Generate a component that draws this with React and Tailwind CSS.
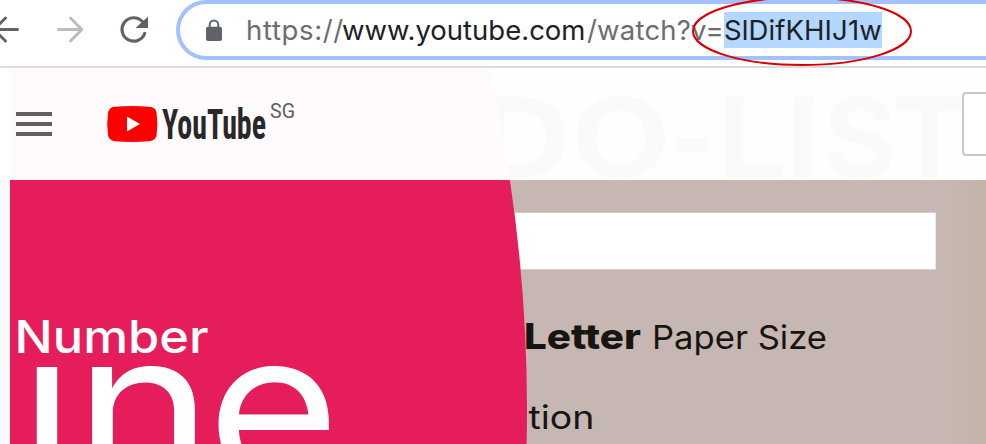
import React from "react";

function BackIcon() {
  return (
    <svg className="h-9 w-9 shrink-0" viewBox="0 0 36 36" fill="none" stroke="#5f6368" strokeWidth="3" strokeLinecap="round" strokeLinejoin="round">
      <path d="M33.5 17.5H10M21.5 6L10 17.5L21.5 29" />
    </svg>
  );
}

function ForwardIcon() {
  return (
    <svg className="h-9 w-9 shrink-0" viewBox="0 0 36 36" fill="none" stroke="#babcbe" strokeWidth="3" strokeLinecap="round" strokeLinejoin="round">
      <path d="M6.5 17.5H29.5M18.5 6L29.8 17.5L18.5 29" />
    </svg>
  );
}

function ReloadIcon() {
  return (
    <svg className="h-9 w-9 shrink-0" viewBox="0 0 36 36" fill="none">
      <path d="M26.3 9.5A11.7 11.7 0 1 0 28.7 21.5" stroke="#5f6368" strokeWidth="3.2" strokeLinecap="round" />
      <path d="M32 4.5V16H19.5Z" fill="#5f6368" />
    </svg>
  );
}

function LockIcon() {
  return (
    <svg className="h-6 w-4 shrink-0" viewBox="0 0 16 24" fill="none">
      <path d="M3.7 9V6.8a4.3 4.3 0 0 1 8.6 0V9" stroke="#5f6368" strokeWidth="2" />
      <rect x="0" y="8.7" width="16" height="14.3" rx="2" fill="#5f6368" />
    </svg>
  );
}

function Toolbar() {
  return (
    <div className="relative z-10 flex h-[68px] items-start border-b-2 border-[#dadce0] bg-white">
      <div className="flex h-[60px] w-[176px] shrink-0 items-center">
        <div className="-ml-4 flex items-center">
          <BackIcon />
          <span className="w-8" />
          <ForwardIcon />
          <span className="w-7" />
          <ReloadIcon />
        </div>
      </div>
      <div className="flex h-[60px] flex-1 items-center rounded-l-full border-y-4 border-l-4 border-[#a3c2fd] pl-[26px]">
        <LockIcon />
        <div className="ml-6 flex items-center whitespace-pre font-['Inter','Roboto',sans-serif] text-[27.5px] leading-[37px] text-[#6b6d70]">
          <span className="h-9 w-[96px] tracking-[0.65px]">https://</span>
          <span className="h-9 w-[245px] text-[#202124]">www.youtube.com</span>
          <span className="h-9 w-[137px] tracking-[0.2px]">/watch?v=</span>
          <span className="h-9 w-[158px] bg-[#b3d7ff] tracking-[0.1px] text-[#202124]">SlDifKHIJ1w</span>
        </div>
      </div>
      <svg className="absolute left-[690px] top-0 h-[68px] w-[224px]" viewBox="0 0 224 68" fill="none">
        <ellipse cx="112" cy="31.2" rx="109" ry="33.8" stroke="#da0000" strokeWidth="2" />
      </svg>
    </div>
  );
}

function Masthead() {
  return (
    <header className="relative flex h-28 items-start overflow-hidden pl-[10px]">
      <svg className="absolute left-[10px] top-0 h-28 w-[976px]" viewBox="10 68 976 112">
        <rect x="10" y="68" width="976" height="112" fill="#fefefd" />
        <text y="178" fontFamily="Inter, sans-serif" fontWeight="700" fontSize="111" fill="#fafafb">
          <tspan x="476" textLength="96" lengthAdjust="spacingAndGlyphs">D</tspan>
          <tspan x="571" textLength="100" lengthAdjust="spacingAndGlyphs">O</tspan>
          <tspan x="670" textLength="44" lengthAdjust="spacingAndGlyphs">-</tspan>
          <tspan x="717" textLength="70" lengthAdjust="spacingAndGlyphs">L</tspan>
          <tspan x="785" textLength="37" lengthAdjust="spacingAndGlyphs">I</tspan>
          <tspan x="822" textLength="75" lengthAdjust="spacingAndGlyphs">S</tspan>
          <tspan x="892" textLength="76" lengthAdjust="spacingAndGlyphs">T</tspan>
        </text>
        <circle cx="-1029" cy="410" r="1556" fill="#fffbfc" />
      </svg>
      <div className="relative ml-[6px] mt-[44px] flex w-9 flex-col gap-[6px]">
        <span className="h-1 bg-[#606060]" />
        <span className="h-1 bg-[#606060]" />
        <span className="h-1 bg-[#606060]" />
      </div>
      <svg className="relative ml-[54px] mt-[32px] h-12 w-[190px]" viewBox="106 100 190 48">
        <path d="M115 106.8Q132 105.4 149 106.8Q156 107.4 156.6 113Q158.2 124 156.6 135Q156 140.6 149 141.2Q132 142.6 115 141.2Q108.8 140.6 108 135Q106.4 124 108 113Q108.8 107.4 115 106.8Z" fill="#f00" />
        <path d="M127 116.5V131.5L140 124Z" fill="#fff" />
        <text className="[font-stretch:75%]" x="162" y="139.2" textLength="104" lengthAdjust="spacingAndGlyphs" fontFamily="Roboto, sans-serif" fontWeight="700" fontSize="42" fill="#282828">YouTube</text>
        <text x="270" y="117.6" textLength="25" lengthAdjust="spacingAndGlyphs" fontFamily="Roboto, sans-serif" fontSize="20" fill="#606060">SG</text>
      </svg>
      <div className="relative ml-auto mt-6 h-16 w-6 rounded-l-[4px] border-y-2 border-l-2 border-[#c8c8c8] bg-white" />
    </header>
  );
}

function VideoFrame() {
  return (
    <main className="flex h-[264px] bg-[#f9f9f9] pl-[10px]">
      <svg className="h-[264px] w-[976px]" viewBox="10 180 976 264">
        <defs>
          <linearGradient id="wall" x1="0" x2="1" y1="0" y2="0">
            <stop offset="0" stopColor="#c6b7b2" />
            <stop offset="0.96" stopColor="#c6b7b2" />
            <stop offset="0.985" stopColor="#c6b5ad" />
            <stop offset="1" stopColor="#c4b3a9" />
          </linearGradient>
          <clipPath id="lowerWord">
            <rect x="10" y="360" width="500" height="84" />
          </clipPath>
        </defs>
        <rect x="10" y="180" width="976" height="264" fill="url(#wall)" />
        <rect x="500" y="212.7" width="435.7" height="56.6" fill="#fff" />
        <g fontFamily="Inter, sans-serif" fill="#171512">
          <text x="524" y="349" textLength="117" lengthAdjust="spacingAndGlyphs" fontWeight="800" fontSize="35">Letter</text>
          <text x="652" y="349.4" textLength="175" lengthAdjust="spacingAndGlyphs" fontSize="32.5">Paper Size</text>
          <text x="528.5" y="429.3" textLength="66" lengthAdjust="spacingAndGlyphs" fontSize="32.5">tion</text>
        </g>
        <circle cx="-1029" cy="410" r="1556" fill="#e61d5b" />
        <text x="14.5" y="353.3" textLength="194" lengthAdjust="spacingAndGlyphs" fontFamily="Inter, sans-serif" fontWeight="500" fontSize="45.5" fill="#fff">Number</text>
        <g clipPath="url(#lowerWord)">
          <text y="481" fontFamily="Inter, sans-serif" fontWeight="400" fontSize="208" fill="#fff">
            <tspan x="19" textLength="56" lengthAdjust="spacingAndGlyphs">i</tspan>
            <tspan x="74" textLength="139" lengthAdjust="spacingAndGlyphs">n</tspan>
            <tspan x="207" textLength="133" lengthAdjust="spacingAndGlyphs">e</tspan>
          </text>
        </g>
      </svg>
    </main>
  );
}

export default function App() {
  return (
    <div className="h-[444px] w-[986px] overflow-hidden bg-white">
      <Toolbar />
      <Masthead />
      <VideoFrame />
    </div>
  );
}
